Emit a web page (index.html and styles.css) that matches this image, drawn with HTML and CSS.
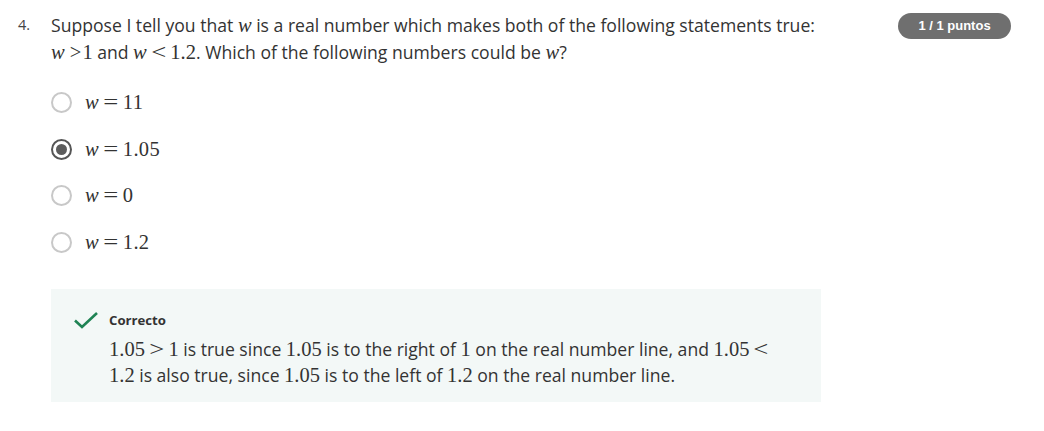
FILE: index.html
```html
<!DOCTYPE html>
<html>
<head>
<meta charset="utf-8">
<link rel="stylesheet" href="styles.css">
</head>
<body>
<div class="question">
  <div class="qnum">4.</div>
  <div class="qbody">
    <div class="prompt">Suppose I tell you that <span class="m"><i>w</i></span> is a real number which makes both of the following statements true: <span class="m"><i>w</i> <span class="rel">&gt;</span>1</span> and <span class="m"><i>w</i><span class="op">&lt;</span>1.2</span>. Which of the following numbers could be <span class="m"><i>w</i></span>?</div>
    <div class="options">
      <label class="option"><span class="radio"></span><span class="m"><i>w</i><span class="op">=</span>11</span></label>
      <label class="option"><span class="radio checked"></span><span class="m"><i>w</i><span class="op">=</span>1.05</span></label>
      <label class="option"><span class="radio"></span><span class="m"><i>w</i><span class="op">=</span>0</span></label>
      <label class="option"><span class="radio"></span><span class="m"><i>w</i><span class="op">=</span>1.2</span></label>
    </div>
    <div class="feedback">
      <svg class="check" width="26" height="18" viewBox="0 0 26 18"><path d="M2 9.5 L9 16 L24 2" fill="none" stroke="#1f8354" stroke-width="2.6"/></svg>
      <div class="fb-text">
        <div class="fb-title">Correcto</div>
        <div class="fb-body"><span class="m">1.05<span class="op">&gt;</span>1</span> is true since <span class="m">1.05</span> is to the right of <span class="m">1</span> on the real number line, and <span class="m">1.05<span class="op">&lt;</span></span> <span class="m">1.2</span> is also true, since <span class="m">1.05</span> is to the left of <span class="m">1.2</span> on the real number line.</div>
      </div>
    </div>
  </div>
  <div class="badge">1 / 1 puntos</div>
</div>
</body>
</html>
```

FILE: styles.css
```css
html, body {
  margin: 0;
  padding: 0;
  background: #ffffff;
}
body {
  font-family: "Open Sans", "Noto Sans", sans-serif;
  color: #333333;
}
.question {
  display: flex;
  align-items: flex-start;
  padding: 12px 33px 0 18px;
}
.qnum {
  width: 33px;
  font-size: 14.5px;
  line-height: 26px;
  color: #444;
}
.qbody {
  width: 770px;
}
.prompt {
  font-size: 17.6px;
  line-height: 27px;
  color: #333;
}
.m {
  font-family: "Liberation Serif", "DejaVu Serif", serif;
  font-size: 20.5px;
  color: #333;
}
.m i {
  font-style: italic;
}
.op {
  margin: 0 6px;
  display: inline-block;
  transform: scaleX(1.3);
}
.rel {
  margin-right: 1px;
}
.options {
  margin-top: 13px;
  display: flex;
  flex-direction: column;
}
.option {
  height: 46.7px;
  display: flex;
  align-items: center;
  gap: 13px;
}
.radio {
  box-sizing: border-box;
  width: 21px;
  height: 21px;
  border: 2px solid #c8c8c8;
  border-radius: 50%;
  display: flex;
  align-items: center;
  justify-content: center;
}
.radio.checked {
  border-color: #555555;
}
.radio.checked::after {
  content: "";
  width: 11px;
  height: 11px;
  border-radius: 50%;
  background: #5c5c5c;
}
.option .m {
  letter-spacing: 0.3px;
}
.feedback {
  margin-top: 23px;
  background: #f3f8f7;
  display: flex;
  gap: 10px;
  padding: 21px 28px 15px 22px;
  height: 113px;
  box-sizing: border-box;
}
.check {
  margin-top: 1px;
  flex: none;
}
.fb-title {
  font-size: 13.2px;
  font-weight: 700;
  line-height: 20px;
  color: #333;
}
.fb-body {
  font-size: 17.6px;
  line-height: 26px;
  color: #333;
  margin-top: 6px;
}
.badge {
  margin-left: auto;
  margin-top: 1px;
  background: #6f6f6f;
  color: #ffffff;
  font-family: "Liberation Sans", Arial, sans-serif;
  font-weight: 700;
  font-size: 13px;
  height: 26px;
  line-height: 26px;
  width: 113px;
  text-align: center;
  border-radius: 13px;
}
```
